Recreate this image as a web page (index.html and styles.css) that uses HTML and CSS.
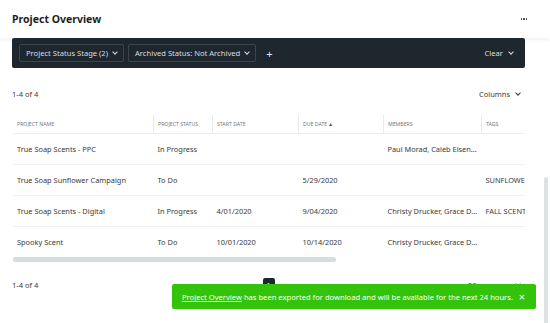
FILE: index.html
```html
<!DOCTYPE html>
<html lang="en">
<head>
    <meta charset="UTF-8">
    <meta name="viewport" content="width=device-width, initial-scale=1.0">
    <title>Project Overview</title>
    <link rel="stylesheet" href="styles.css">
</head>
<body>

    <div class="header">
        <h1>Project Overview</h1>
        <span class="more"><i></i><i></i><i></i></span>
    </div>

    <div class="filterbar">
        <button class="chip">Project Status Stage (2) <span class="chev"></span></button>
        <button class="chip">Archived Status: Not Archived <span class="chev"></span></button>
        <span class="add">+</span>
        <button class="clear">Clear <span class="chev"></span></button>
    </div>

    <div class="toolbar">
        <span>1-4 of 4</span>
        <span class="columns">Columns <span class="chev dark"></span></span>
    </div>

    <div class="tablewrap">
        <table>
            <thead>
                <tr>
                    <th class="c1">Project Name</th>
                    <th class="c2">Project Status</th>
                    <th class="c3">Start Date</th>
                    <th class="c4">Due Date <span class="sort">&#9652;</span></th>
                    <th class="c5">Members</th>
                    <th class="c6">Tags</th>
                    <th class="c7">Owner</th>
                </tr>
            </thead>
            <tbody>
                <tr>
                    <td>True Soap Scents - PPC</td>
                    <td>In Progress</td>
                    <td></td>
                    <td></td>
                    <td>Paul Morad, Caleb Eisen...</td>
                    <td></td>
                    <td></td>
                </tr>
                <tr>
                    <td>True Soap Sunflower Campaign</td>
                    <td>To Do</td>
                    <td></td>
                    <td>5/29/2020</td>
                    <td></td>
                    <td>SUNFLOWER</td>
                    <td></td>
                </tr>
                <tr>
                    <td>True Soap Scents - Digital</td>
                    <td>In Progress</td>
                    <td>4/01/2020</td>
                    <td>9/04/2020</td>
                    <td>Christy Drucker, Grace D...</td>
                    <td>FALL SCENTS</td>
                    <td></td>
                </tr>
                <tr class="last">
                    <td>Spooky Scent</td>
                    <td>To Do</td>
                    <td>10/01/2020</td>
                    <td>10/14/2020</td>
                    <td>Christy Drucker, Grace D...</td>
                    <td></td>
                    <td></td>
                </tr>
            </tbody>
        </table>
    </div>
    <div class="hscroll"><div class="thumb"></div></div>

    <div class="footer">
        <span>1-4 of 4</span>
        <div class="pager">
            <span class="arrow">&lsaquo;</span>
            <span class="page">1</span>
            <span class="arrow">&rsaquo;</span>
        </div>
        <span class="perpage">20 per page <span class="chev dark"></span></span>
    </div>

    <div class="toast">
        <p><a href="#">Project Overview</a> has been exported for download and will be available for the next 24 hours.</p>
        <span class="close">&times;</span>
    </div>

    <div class="vscroll"></div>

</body>
</html>
```

FILE: styles.css
```css
body {
    margin: 0;
    font-family: "Noto Sans", "Open Sans", sans-serif;
    color: #3a3a3a;
    background: #fff;
    position: relative;
    height: 323px;
    overflow: hidden;
}
.header {
    height: 38px;
    display: flex;
    align-items: center;
    justify-content: space-between;
    padding: 0 23px 0 12px;
    box-shadow: 0 2px 4px rgba(0, 0, 0, 0.06);
}
.header h1 {
    margin: 0;
    font-size: 10.5px;
    font-weight: 700;
    color: #1e1e1e;
}
.more {
    display: flex;
    gap: 1px;
}
.more i {
    width: 1.5px;
    height: 1.5px;
    background: #333;
    border-radius: 50%;
}
.filterbar {
    height: 30px;
    margin: 0 25px 0 12px;
    background: #1f272e;
    border-radius: 2px;
    display: flex;
    align-items: center;
    padding: 0 12px 0 7px;
    gap: 4px;
}
.chip, .clear {
    font-family: inherit;
    font-size: 7.6px;
    color: #d9dde1;
    background: transparent;
    border: 1px solid #3b454e;
    border-radius: 2px;
    height: 18px;
    padding: 0 6px;
    display: flex;
    align-items: center;
    gap: 5px;
}
.clear {
    border: none;
    margin-left: auto;
    padding: 0;
    gap: 6px;
}
.add {
    color: #e4e7ea;
    font-size: 11px;
    margin-left: 6px;
}
.chev {
    width: 3px;
    height: 3px;
    border-right: 1px solid currentColor;
    border-bottom: 1px solid currentColor;
    transform: rotate(45deg);
    margin-top: -2px;
    display: inline-block;
}
.chev.dark {
    margin-left: 4px;
    vertical-align: 2px;
}
.toolbar {
    margin: 16px 25px 0 12px;
    height: 20px;
    display: flex;
    align-items: center;
    justify-content: space-between;
    font-size: 7.5px;
}
.columns {
    padding-right: 5px;
}
.tablewrap {
    margin: 11px 25px 0 13px;
    overflow: hidden;
}
table {
    border-collapse: collapse;
    table-layout: fixed;
    width: 700px;
}
th {
    height: 18px;
    padding: 0 4px;
    text-align: left;
    font-size: 5.2px;
    font-weight: 400;
    text-transform: uppercase;
    color: #777;
    border-left: 1px solid #eaeaea;
    border-bottom: 1px solid #eeeeee;
    white-space: nowrap;
    overflow: hidden;
}
th.c1 { border-left: none; width: 132px; }
th.c2 { width: 50px; }
th.c3 { width: 77px; }
th.c4 { width: 76px; }
th.c5 { width: 89px; }
th.c6 { width: 90px; }
.sort {
    font-size: 6px;
    color: #555;
}
td {
    height: 30px;
    padding: 0 4px;
    font-size: 7.4px;
    border-bottom: 1px solid #f1f1f1;
    white-space: nowrap;
    overflow: hidden;
}
tr.last td {
    border-bottom: none;
}
.hscroll {
    margin: 0 25px 0 13px;
    height: 5px;
}
.thumb {
    width: 323px;
    height: 5px;
    border-radius: 3px;
    background: #d6dce4;
}
.footer {
    margin: 13px 25px 0 12px;
    height: 20px;
    display: grid;
    grid-template-columns: 1fr auto 1fr;
    align-items: center;
    font-size: 7.5px;
}
.pager {
    display: flex;
    align-items: center;
    gap: 8px;
}
.arrow {
    color: #aaa;
    font-size: 9px;
}
.page {
    width: 12px;
    height: 15px;
    background: #1f272e;
    color: #fff;
    border-radius: 2px;
    display: flex;
    align-items: center;
    justify-content: center;
    font-size: 7px;
}
.perpage {
    justify-self: end;
    padding-right: 5px;
}
.toast {
    position: absolute;
    left: 172px;
    top: 284px;
    width: 364px;
    height: 25px;
    box-sizing: border-box;
    background: #34c30b;
    border-radius: 2px;
    display: flex;
    align-items: center;
    justify-content: space-between;
    padding: 0 11px 0 10px;
    color: #fff;
    font-size: 7.6px;
    white-space: nowrap;
}
.toast p {
    margin: 0;
}
.toast a {
    color: #fff;
}
.close {
    font-size: 11px;
}
.vscroll {
    position: absolute;
    right: 2px;
    top: 177px;
    width: 4px;
    height: 160px;
    border-radius: 2px;
    background: #dde2e9;
}
```
